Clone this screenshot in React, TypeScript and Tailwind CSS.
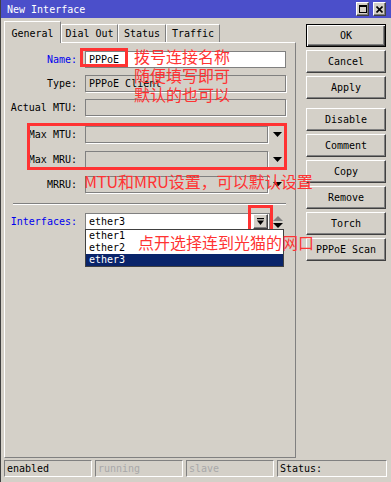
const raised =
  "border border-t-white border-l-white border-r-[#404040] border-b-[#404040] shadow-[inset_-1px_-1px_0_#808080]";
const sunken = "border border-t-[#808080] border-l-[#808080] border-r-white border-b-white";

function Arrow() {
  return (
    <svg width="9" height="5" viewBox="0 0 9 5" className="ml-[5px] shrink-0">
      <polygon points="0,0 9,0 4.5,5" fill="#000" />
    </svg>
  );
}

function Row({
  label,
  blue,
  top,
  children,
}: {
  label: string;
  blue?: boolean;
  top: string;
  children: React.ReactNode;
}) {
  return (
    <div className={`flex items-center h-[17px] ${top}`}>
      <div className={`w-[72px] text-right ${blue ? "text-[#0000ee]" : "text-black"}`}>{label}</div>
      <div className="ml-[8px] flex items-center">{children}</div>
    </div>
  );
}

function Field({ value, white, w }: { value?: string; white?: boolean; w: string }) {
  return (
    <div
      className={`${w} h-[17px] border border-[#808080] pl-[3px] flex items-center ${
        white ? "bg-white" : "shadow-[1px_1px_0_#fff]"
      }`}
    >
      {value}
    </div>
  );
}

export default function App() {
  const buttons = ["OK", "Cancel", "Apply", "Disable", "Comment", "Copy", "Remove", "Torch", "PPPoE Scan"];
  return (
    <div
      className="relative w-[391px] h-[482px] bg-[#d4d0c8] flex flex-col overflow-hidden text-[10px] text-black border-l border-[#404040]"
      style={{ fontFamily: '"DejaVu Sans Mono", "Liberation Mono", monospace' }}
    >
      {/* title bar */}
      <div className="h-[18px] bg-[#4b4fca] flex items-center pl-[6px] pr-[5px] shrink-0">
        <span className="text-white">New Interface</span>
        <div className="ml-auto flex gap-[4px]">
          <div className={`w-[13px] h-[14px] bg-[#d4d0c8] ${raised} flex items-center justify-center`}>
            <div className="w-[8px] h-[8px] border border-black border-t-2" />
          </div>
          <div className={`w-[13px] h-[14px] bg-[#d4d0c8] ${raised} flex items-center justify-center`}>
            <svg width="7" height="7" viewBox="0 0 7 7">
              <path d="M0.5 0.5 L6.5 6.5 M6.5 0.5 L0.5 6.5" stroke="#000" strokeWidth="1.6" />
            </svg>
          </div>
        </div>
      </div>

      <div className="flex flex-1">
        {/* left: tabs + panel */}
        <div className="w-[295px] pl-[3px] pt-[3px] flex flex-col">
          <div className="flex items-end h-[21px]">
            <div className="relative z-10 w-[57px] h-[22px] -mb-[1px] bg-[#d4d0c8] border-t border-l border-white border-r border-r-[#808080] flex justify-center pt-[4px]">
              General
            </div>
            {[
              ["Dial Out", "w-[57px]"],
              ["Status", "w-[48px]"],
              ["Traffic", "w-[54px]"],
            ].map(([t, w]) => (
              <div
                key={t}
                className={`${w} h-[18px] border-t border-l border-white border-r border-r-[#808080] flex items-center justify-center`}
              >
                {t}
              </div>
            ))}
          </div>
          <div className="flex-1 mb-[1px] border border-t-white border-l-white border-r-[#808080] border-b-[#808080] flex flex-col">
            <Row label="Name:" blue top="mt-[8px]">
              <Field value="PPPoE" white w="w-[201px]" />
            </Row>
            <Row label="Type:" top="mt-[7px]">
              <Field value="PPPoE Client" w="w-[201px]" />
            </Row>
            <Row label="Actual MTU:" top="mt-[7px]">
              <Field w="w-[201px]" />
            </Row>
            <Row label="Max MTU:" top="mt-[10px]">
              <Field w="w-[183px]" />
              <Arrow />
            </Row>
            <Row label="Max MRU:" top="mt-[8px]">
              <Field w="w-[183px]" />
              <Arrow />
            </Row>
            <Row label="MRRU:" top="mt-[8px]">
              <Field w="w-[183px]" />
              <Arrow />
            </Row>
            <div className="mt-[10px] ml-[8px] w-[273px] h-[2px] border-t border-[#808080] border-b border-b-white" />
            <Row label="Interfaces:" blue top="mt-[8px]">
              <div className="relative">
                <div className="w-[185px] h-[17px] bg-white border border-[#808080] pl-[3px] flex items-center">
                  ether3
                  <div className={`ml-auto mr-[1px] w-[15px] h-[15px] bg-[#d4d0c8] ${raised} flex items-center justify-center`}>
                    <svg width="7" height="7" viewBox="0 0 7 7">
                      <rect x="0" y="0" width="7" height="1.2" fill="#000" />
                      <polygon points="0,2.5 7,2.5 3.5,7" fill="#000" />
                    </svg>
                  </div>
                </div>
                <div className="absolute left-0 top-[16px] w-[199px] bg-white border border-[#404040] flex flex-col z-10">
                  <div className="h-[12px] pl-[3px] leading-[12px]">ether1</div>
                  <div className="h-[12px] pl-[3px] leading-[12px]">ether2</div>
                  <div className="h-[12px] pl-[3px] leading-[12px] bg-[#0a246a] text-white">ether3</div>
                </div>
              </div>
              <div className="ml-[3px] flex flex-col gap-[2px]">
                <svg width="10" height="5" viewBox="0 0 10 5">
                  <polygon points="0,5 10,5 5,0" fill="#808080" />
                </svg>
                <svg width="10" height="5" viewBox="0 0 10 5">
                  <polygon points="0,0 10,0 5,5" fill="#000" />
                </svg>
              </div>
            </Row>
          </div>
        </div>

        {/* right: buttons */}
        <div className="pl-[10px] pt-[6px] flex flex-col gap-[3px]">
          {buttons.map((b, i) => (
            <div
              key={b}
              className={`w-[80px] h-[23px] flex items-center justify-center ${i === 3 ? "mt-[6px]" : ""} ${
                i === 0
                  ? "border border-black shadow-[inset_1px_1px_0_#fff,inset_-1px_-1px_0_#404040,inset_-2px_-2px_0_#808080]"
                  : raised
              }`}
            >
              {b}
            </div>
          ))}
        </div>
      </div>

      {/* status bar */}
      <div className="h-[23px] shrink-0 flex gap-[3px] pl-[3px] pt-[1px]">
        <div className={`w-[88px] h-[17px] ${sunken} pl-[2px] flex items-center`}>enabled</div>
        <div className={`w-[88px] h-[17px] ${sunken} pl-[2px] flex items-center text-[#a8a8a8]`}>running</div>
        <div className={`w-[88px] h-[17px] ${sunken} pl-[2px] flex items-center text-[#a8a8a8]`}>slave</div>
        <div className={`w-[110px] h-[17px] ${sunken} pl-[2px] flex items-center`}>Status:</div>
      </div>

      {/* red annotations */}
      <div className="absolute left-[79px] top-[48px] w-[48px] h-[19px] border-[3px] border-[#ff3333]" />
      <div className="absolute left-[26px] top-[123px] w-[260px] h-[47px] border-[3px] border-[#ff3333]" />
      <div className="absolute left-[247px] top-[205px] w-[25px] h-[27px] border-[3px] border-[#ff3333]" />
      <div
        className="absolute left-[133px] top-[47px] text-[16px] leading-[19px] text-[#ff3333] whitespace-nowrap"
        style={{ fontFamily: '"Noto Sans CJK SC", sans-serif' }}
      >
        <div>拨号连接名称</div>
        <div>随便填写即可</div>
        <div>默认的也可以</div>
      </div>
      <div
        className="absolute left-[83px] top-[171px] text-[16px] leading-[20px] text-[#ff3333] whitespace-nowrap"
        style={{ fontFamily: '"Noto Sans CJK SC", sans-serif' }}
      >
        MTU和MRU设置，可以默认设置
      </div>
      <div
        className="absolute left-[137px] top-[232px] text-[16px] leading-[20px] text-[#ff3333] whitespace-nowrap z-20"
        style={{ fontFamily: '"Noto Sans CJK SC", sans-serif' }}
      >
        点开选择连到光猫的网口
      </div>
    </div>
  );
}
